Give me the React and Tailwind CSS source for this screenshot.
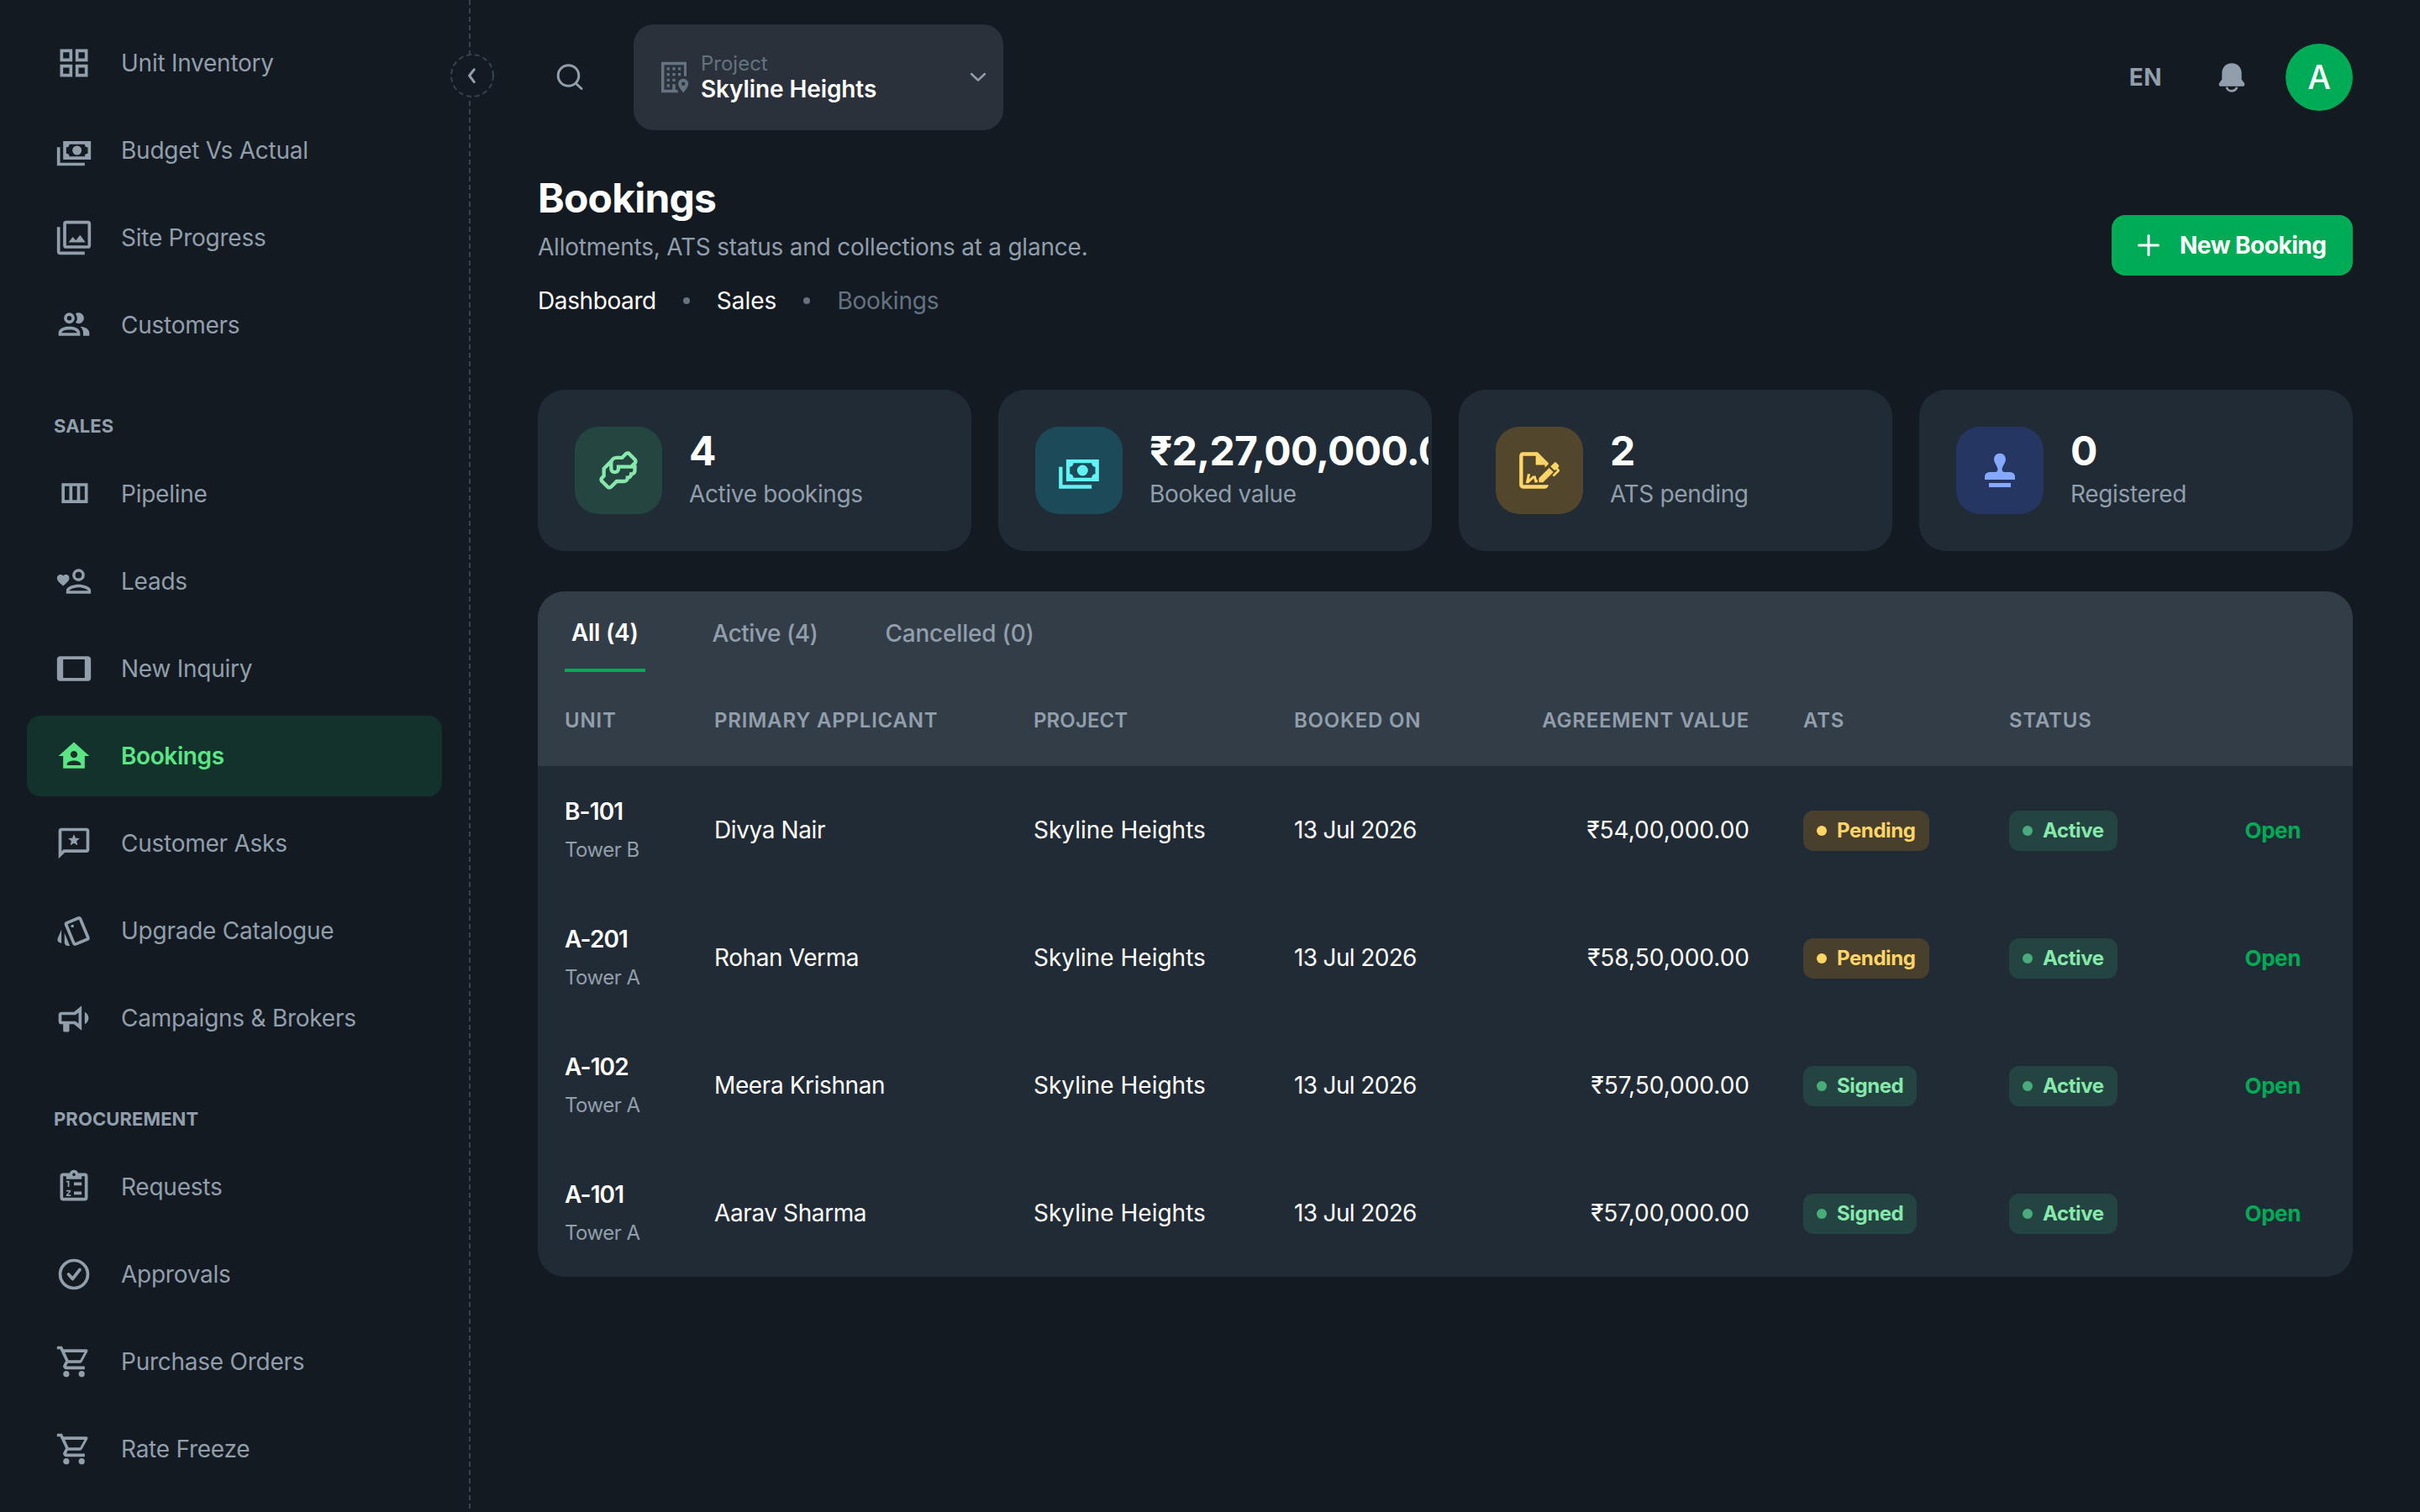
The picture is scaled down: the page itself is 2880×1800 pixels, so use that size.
import { MdOutlineStyle } from "react-icons/md";

const PATHS = {
  grid: "M3 3V11H11V3H3M9 9H5V5H9V9M3 13V21H11V13H3M9 19H5V15H9V19M13 3V11H21V3H13M19 9H15V5H19V9M13 13V21H21V13H13M19 19H15V15H19V19Z",
  cash: "M5,6H23V18H5V6M14,9A3,3 0 0,1 17,12A3,3 0 0,1 14,15A3,3 0 0,1 11,12A3,3 0 0,1 14,9M9,8A2,2 0 0,1 7,10V14A2,2 0 0,1 9,16H19A2,2 0 0,1 21,14V10A2,2 0 0,1 19,8H9M1,10H3V20H19V22H1V10Z",
  images: "M21,17H7V3H21M21,1H7A2,2 0 0,0 5,3V17A2,2 0 0,0 7,19H21A2,2 0 0,0 23,17V3A2,2 0 0,0 21,1M3,5H1V21A2,2 0 0,0 3,23H19V21H3M15.96,10.29L13.21,13.83L11.25,11.47L8.5,15H19.5L15.96,10.29Z",
  people: "M13.07 10.41A5 5 0 0 0 13.07 4.59A3.39 3.39 0 0 1 15 4A3.5 3.5 0 0 1 15 11A3.39 3.39 0 0 1 13.07 10.41M5.5 7.5A3.5 3.5 0 1 1 9 11A3.5 3.5 0 0 1 5.5 7.5M7.5 7.5A1.5 1.5 0 1 0 9 6A1.5 1.5 0 0 0 7.5 7.5M16 17V19H2V17S2 13 9 13 16 17 16 17M14 17C13.86 16.22 12.67 15 9 15S4.07 16.31 4 17M15.95 13A5.32 5.32 0 0 1 18 17V19H22V17S22 13.37 15.94 13Z",
  columns: "M4 5V18H21V5H4M6 16V7H9V16H6M11 16V7H14V16H11M19 16H16V7H19V16Z",
  lead: "M15,14C12.3,14 7,15.3 7,18V20H23V18C23,15.3 17.7,14 15,14M8.9,18.1C8.9,17.5 12,15.9 15,15.9C18,15.9 21.1,17.4 21.1,18.1H8.9M15,4A4,4 0 0,0 11,8A4,4 0 0,0 15,12A4,4 0 0,0 19,8A4,4 0 0,0 15,4M15,10.1A2.1,2.1 0 0,1 12.9,8A2.1,2.1 0 0,1 15,5.9C16.2,5.9 17.1,6.8 17.1,8C17.1,9.2 16.2,10.1 15,10.1M5,15L4.4,14.5C2.4,12.6 1,11.4 1,9.9C1,8.7 2,7.7 3.2,7.7C3.9,7.7 4.6,8 5,8.5C5.4,8 6.1,7.7 6.8,7.7C8,7.7 9,8.6 9,9.9C9,11.4 7.6,12.6 5.6,14.5L5,15Z",
  tablet: "M19,18H5V6H19M21,4H3C1.89,4 1,4.89 1,6V18A2,2 0 0,0 3,20H21A2,2 0 0,0 23,18V6C23,4.89 22.1,4 21,4Z",
  home: "M12 3L2 12H5V20H19V12H22L12 3M12 8.75A2.25 2.25 0 0 1 14.25 11 2.25 2.25 0 0 1 12 13.25 2.25 2.25 0 0 1 9.75 11 2.25 2.25 0 0 1 12 8.75M12 15C13.5 15 16.5 15.75 16.5 17.25V18H7.5V17.25C7.5 15.75 10.5 15 12 15Z",
  star: "M4 2A2 2 0 0 0 2 4V22L6 18H20A2 2 0 0 0 22 16V4A2 2 0 0 0 20 2H4M4 4H20V16H5.17L4 17.17V4M12 6L10.93 8.54L8.2 8.77L10.27 10.56L9.65 13.25L12 11.82L14.35 13.25L13.73 10.56L15.8 8.77L13.07 8.54L12 6Z",
  horn: "M12,8H4A2,2 0 0,0 2,10V14A2,2 0 0,0 4,16H5V20A1,1 0 0,0 6,21H8A1,1 0 0,0 9,20V16H12L17,20V4L12,8M15,15.6L13,14H4V10H13L15,8.4V15.6M21.5,12C21.5,13.71 20.54,15.26 19,16V8C20.53,8.75 21.5,10.3 21.5,12Z",
  clipboard: "M19,3H14.82C14.4,1.84 13.3,1 12,1C10.7,1 9.6,1.84 9.18,3H5A2,2 0 0,0 3,5V19A2,2 0 0,0 5,21H19A2,2 0 0,0 21,19V5A2,2 0 0,0 19,3M12,3A1,1 0 0,1 13,4A1,1 0 0,1 12,5A1,1 0 0,1 11,4A1,1 0 0,1 12,3M7,7H17V5H19V19H5V5H7V7M12 17V15H17V17H12M12 11V9H17V11H12M8 12V9H7V8H9V12H8M9.25 14A.75.75 0 0 1 10 14.75C10 14.95 9.92 15.14 9.79 15.27L8.12 17H10V18H7V17.08L9 15H7V14H9.25Z",
  cart: "M17,18A2,2 0 0,1 19,20A2,2 0 0,1 17,22C15.89,22 15,21.1 15,20C15,18.89 15.89,18 17,18M1,2H4.27L5.21,4H20A1,1 0 0,1 21,5C21,5.17 20.95,5.34 20.88,5.5L17.3,11.97C16.96,12.58 16.3,13 15.55,13H8.1L7.2,14.63L7.17,14.75A0.25,0.25 0 0,0 7.42,15H19V17H7C5.89,17 5,16.1 5,15C5,14.65 5.09,14.32 5.24,14.04L6.6,11.59L3,4H1V2M7,18A2,2 0 0,1 9,20A2,2 0 0,1 7,22C5.89,22 5,21.1 5,20C5,18.89 5.89,18 7,18M16,11L18.78,6H6.14L8.5,11H16Z",
  handshake: "M21.71 8.71C22.96 7.46 22.39 6 21.71 5.29L18.72 2.29C17.45 1.04 16 1.61 15.29 2.29L13.59 4H11C9.1 4 8 5 7.44 6.15L3 10.59V14.59L2.29 15.29C1.04 16.55 1.61 18 2.29 18.71L5.29 21.71C5.83 22.25 6.41 22.45 6.96 22.45C7.67 22.45 8.32 22.1 8.71 21.71L11.41 19H15C16.7 19 17.56 17.94 17.87 16.9C19 16.6 19.62 15.74 19.87 14.9C21.42 14.5 22 13.03 22 12V9H21.41L21.71 8.71M20 12C20 12.45 19.81 13 19 13L18 13L18 14C18 14.45 17.81 15 17 15L16 15L16 16C16 16.45 15.81 17 15 17H10.59L7.31 20.28C7 20.57 6.82 20.4 6.71 20.29L3.72 17.31C3.43 17 3.6 16.82 3.71 16.71L5 15.41V11.41L7 9.41V11C7 12.21 7.8 14 10 14S13 12.21 13 11H20V12M20.29 7.29L18.59 9H11V11C11 11.45 10.81 12 10 12S9 11.45 9 11V8C9 7.54 9.17 6 11 6H14.41L16.69 3.72C17 3.43 17.18 3.6 17.29 3.71L20.28 6.69C20.57 7 20.4 7.18 20.29 7.29Z",
  sign: "M19.7 12.9L14 18.6H11.7V16.3L17.4 10.6L19.7 12.9M23.1 12.1C23.1 12.4 22.8 12.7 22.5 13L20 15.5L19.1 14.6L21.7 12L21.1 11.4L20.4 12.1L18.1 9.8L20.3 7.7C20.5 7.5 20.9 7.5 21.2 7.7L22.6 9.1C22.8 9.3 22.8 9.7 22.6 10C22.4 10.2 22.2 10.4 22.2 10.6C22.2 10.8 22.4 11 22.6 11.2C22.9 11.5 23.2 11.8 23.1 12.1M3 20V4H10V9H15V10.5L17 8.5V8L11 2H3C1.9 2 1 2.9 1 4V20C1 21.1 1.9 22 3 22H15C16.1 22 17 21.1 17 20H3M11 17.1C10.8 17.1 10.6 17.2 10.5 17.2L10 15H8.5L6.4 16.7L7 14H5.5L4.5 19H6L8.9 16.4L9.5 18.7H10.5L11 18.6V17.1Z",
  stamp: "M12 2.6C10.1 2.6 8.8 4 8.8 5.9C8.8 8 10.8 9.6 10.8 11.5C10.8 12.5 10.2 12.9 9.3 12.9H6.3A2.6 2.6 0 0 0 3.7 15.5V17.1H20.3V15.5A2.6 2.6 0 0 0 17.7 12.9H14.7C13.8 12.9 13.2 12.5 13.2 11.5C13.2 9.6 15.2 8 15.2 5.9C15.2 4 13.9 2.6 12 2.6M6 18.9V21.2H18V18.9H6Z",
  bell: "M12 2C7.6 2 5 5.2 5 9V13.5L3.1 16C2.4 17 3 18.5 4.3 18.5H19.7C21 18.5 21.6 17 20.9 16L19 13.5V9C19 5.2 16.4 2 12 2Z",
};

function Icon({ name, className }) {
  return (
    <svg viewBox="0 0 24 24" fill="currentColor" fillRule="evenodd" className={className}>
      <path d={PATHS[name]} />
    </svg>
  );
}

function CheckIcon({ className }) {
  return (
    <svg viewBox="0 0 24 24" fill="none" stroke="currentColor" strokeWidth="2" strokeLinecap="round" strokeLinejoin="round" className={className}>
      <circle cx="12" cy="12" r="9" />
      <path d="M8.5 12l2.6 3L15.8 9" />
    </svg>
  );
}

function BuildingIcon({ className }) {
  return (
    <svg viewBox="0 0 40 40" fill="currentColor" fillRule="evenodd" className={className}>
      <path d="M3 1.7H33V18.8H30V5.2H6.5V34.8H16.3V28.3H19.7V34.8H22L23.4 38.3H3Z" />
      <path d="M9.7 8.3h3.2v3.3h-3.2zM16.4 8.3h3.2v3.3h-3.2zM23 8.3h3.2v3.3H23zM9.7 15h3.2v3.3h-3.2zM16.4 15h3.2v3.3h-3.2zM23 15h3.2v3.3H23zM9.7 21.7h3.2V25h-3.2zM16.4 21.7h3.2V25h-3.2zM9.7 28.3h3.2v3.4h-3.2z" />
      <path d="M29.2 21.7a6.1 6.1 0 0 0-6.1 6.1c0 4 6.1 10.5 6.1 10.5s6.1-6.5 6.1-10.5a6.1 6.1 0 0 0-6.1-6.1zm0 3.9a2.2 2.2 0 1 1 0 4.4 2.2 2.2 0 0 1 0-4.4z" />
    </svg>
  );
}

const inventory = [
  { icon: "grid", label: "Unit Inventory" },
  { icon: "cash", label: "Budget Vs Actual" },
  { icon: "images", label: "Site Progress" },
  { icon: "people", label: "Customers" },
];

const sales = [
  { icon: "columns", label: "Pipeline" },
  { icon: "lead", label: "Leads" },
  { icon: "tablet", label: "New Inquiry" },
  { icon: "home", label: "Bookings", active: true },
  { icon: "star", label: "Customer Asks" },
  { icon: "style", label: "Upgrade Catalogue" },
  { icon: "horn", label: "Campaigns & Brokers" },
];

const procurement = [
  { icon: "clipboard", label: "Requests" },
  { icon: "check", label: "Approvals" },
  { icon: "cart", label: "Purchase Orders" },
  { icon: "cart", label: "Rate Freeze" },
];

const stats = [
  { icon: "handshake", value: "4", label: "Active bookings", tile: "bg-[#254541] text-[#86e8ab]" },
  { icon: "cash", value: "₹2,27,00,000.00", label: "Booked value", tile: "bg-[#1c4a59] text-[#61f3f3]" },
  { icon: "sign", value: "2", label: "ATS pending", tile: "bg-[#52472d] text-[#ffd666]" },
  { icon: "stamp", value: "0", label: "Registered", tile: "bg-[#253662] text-[#84a9ff]" },
];

const bookings = [
  { unit: "B-101", tower: "Tower B", name: "Divya Nair", value: "₹54,00,000.00", ats: "Pending" },
  { unit: "A-201", tower: "Tower A", name: "Rohan Verma", value: "₹58,50,000.00", ats: "Pending" },
  { unit: "A-102", tower: "Tower A", name: "Meera Krishnan", value: "₹57,50,000.00", ats: "Signed" },
  { unit: "A-101", tower: "Tower A", name: "Aarav Sharma", value: "₹57,00,000.00", ats: "Signed" },
];

function NavIcon({ name }) {
  if (name === "style") return <MdOutlineStyle className="size-11" />;
  if (name === "check") return <CheckIcon className="size-11" />;
  return <Icon name={name} className="size-11" />;
}

function NavGroup({ title, items }) {
  return (
    <div>
      {title && (
        <h3 className="flex h-[69px] items-center pl-8 pt-1 text-[22px] font-bold tracking-[0.1px] text-[#919eab]">{title}</h3>
      )}
      <ul className="flex flex-col gap-2">
        {items.map((item) => (
          <li
            key={item.label}
            className={
              item.active
                ? "flex h-24 items-center gap-[34px] rounded-2xl bg-[#14322c] pl-[34px] text-[28px] font-semibold tracking-[-0.4px] text-[#5be584]"
                : "flex h-24 items-center gap-[34px] rounded-2xl pl-[34px] text-[28px] tracking-[-0.25px] text-[#919eab]"
            }
          >
            <NavIcon name={item.icon} />
            <span>{item.label}</span>
          </li>
        ))}
      </ul>
    </div>
  );
}

function Badge({ label }) {
  const pending = label === "Pending";
  return (
    <span
      className={
        pending
          ? "mt-0.5 inline-flex h-12 items-center gap-3 rounded-xl bg-[#483f2d] px-4 text-[24px] font-bold tracking-[-0.4px] text-[#ffd666]"
          : "mt-0.5 inline-flex h-12 items-center gap-3 rounded-xl bg-[#244442] px-4 text-[24px] font-bold tracking-[-0.4px] text-[#86e8ab]"
      }
    >
      <span className={pending ? "size-3 rounded-full bg-[#ffd666]" : "size-3 rounded-full bg-[#4aac7a]"} />
      {label}
    </span>
  );
}

function Sidebar() {
  return (
    <aside className="relative flex w-[560px] shrink-0 flex-col gap-9 pl-8 pr-[34px] pt-[27px]">
      <NavGroup items={inventory} />
      <NavGroup title="SALES" items={sales} />
      <NavGroup title="PROCUREMENT" items={procurement} />
      <svg className="absolute right-0 top-0 h-[1800px] w-0.5" aria-hidden="true">
        <line x1="1" y1="0" x2="1" y2="1800" stroke="#37424d" strokeWidth="2" strokeDasharray="6 4" />
      </svg>
      <button className="absolute left-[536px] top-16 flex size-[52px] items-center justify-center rounded-full bg-[#141a21] text-[#919eab]">
        <svg viewBox="0 0 52 52" fill="none" className="size-[52px]">
          <circle cx="26" cy="26" r="25" stroke="#37424d" strokeWidth="2" strokeDasharray="6 4" />
          <path d="M28.3 18.8L22.6 26l5.7 7.6" stroke="currentColor" strokeWidth="3" strokeLinecap="round" strokeLinejoin="round" />
        </svg>
      </button>
    </aside>
  );
}

function TopBar() {
  return (
    <header className="flex h-[184px] items-center">
      <svg viewBox="0 0 32 32" fill="none" stroke="#919eab" strokeWidth="3" strokeLinecap="round" className="ml-[22px] size-8">
        <circle cx="14.5" cy="14" r="12.3" />
        <path d="M23.5 23.5L30 29.5" />
      </svg>
      <div className="ml-[60px] flex h-[126px] w-[440px] items-center rounded-3xl bg-[#2b313b] pl-[30px] pr-5">
        <BuildingIcon className="size-10 text-[#637381]" />
        <div className="ml-2.5 flex-1 pb-[3px]">
          <p className="text-[24px] leading-[30px] text-[#637381]">Project</p>
          <p className="text-[28px] font-semibold leading-[30px] tracking-[-0.1px] text-white">Skyline Heights</p>
        </div>
        <svg viewBox="0 0 20 12" fill="none" stroke="#919eab" strokeWidth="2.5" strokeLinecap="round" strokeLinejoin="round" className="h-3 w-5">
          <path d="M2 2l8 7.5L18 2" />
        </svg>
      </div>
      <span className="ml-auto text-[28px] font-bold tracking-[0.5px] text-[#919eab]">EN</span>
      <svg viewBox="0 0 24 24" className="ml-[63px] size-10 text-[#919eab]" fill="currentColor">
        <path d={PATHS.bell} />
        <path d="M8.5 19a3.5 2.8 0 0 0 7 0" fill="none" stroke="currentColor" strokeWidth="1.7" />
      </svg>
      <div className="ml-11 flex size-20 items-center justify-center rounded-full bg-[#00ab55] text-[39px] font-medium text-white">A</div>
    </header>
  );
}

function StatCard({ stat }) {
  return (
    <div className="flex h-48 min-w-0 items-center overflow-hidden rounded-[32px] bg-[#212b36] pl-11 pr-1">
      <div className={`flex size-[104px] shrink-0 items-center justify-center rounded-[28px] ${stat.tile}`}>
        <Icon name={stat.icon} className="size-[52px]" />
      </div>
      <div className="-mt-1 ml-8 min-w-0 flex-1">
        <p className="overflow-hidden whitespace-nowrap text-[48px] font-bold leading-[60px] tracking-[-0.7px] text-white">{stat.value}</p>
        <p className="text-[28px] leading-[42px] tracking-[-0.35px] text-[#919eab]">{stat.label}</p>
      </div>
    </div>
  );
}

function BookingsTable() {
  const cols = "grid grid-cols-[178px_380px_310px_270px_272px_309px_280px_1fr] pl-8 pr-[62px]";
  return (
    <section className="mt-12 overflow-hidden rounded-[32px] bg-[#212b36]">
      <div className="h-[208px] bg-[#333d48]">
        <nav className="flex h-24 gap-20 pl-8 text-[28px] font-medium text-[#919eab]">
          <span className="flex items-center border-b-4 border-[#00ab55] px-2 pt-1.5 font-semibold tracking-[-0.3px] text-white">All (4)</span>
          <span className="flex items-center pt-1 tracking-[-0.5px]">Active (4)</span>
          <span className="flex items-center pt-1 tracking-[-0.2px]">Cancelled (0)</span>
        </nav>
        <div className={`${cols} h-28 items-center pt-[3px] text-[24px] font-semibold tracking-[0.8px] text-[#919eab]`}>
          <span>UNIT</span>
          <span>PRIMARY APPLICANT</span>
          <span className="tracking-[0.1px]">PROJECT</span>
          <span>BOOKED ON</span>
          <span className="text-right">AGREEMENT VALUE</span>
          <span className="pl-16">ATS</span>
          <span>STATUS</span>
        </div>
      </div>
      {bookings.map((b) => (
        <div key={b.unit} className={`${cols} h-[152px] items-center text-[28px] text-white`}>
          <div>
            <p className="font-semibold leading-[46px] tracking-[-0.9px]">{b.unit}</p>
            <p className="pt-px text-[24px] leading-[44px] tracking-[-0.5px] text-[#919eab]">{b.tower}</p>
          </div>
          <span className="tracking-[-0.4px]">{b.name}</span>
          <span>Skyline Heights</span>
          <span className="tracking-[-0.65px]">13 Jul 2026</span>
          <span className="text-right">{b.value}</span>
          <span className="flex pl-16"><Badge label={b.ats} /></span>
          <span className="flex"><Badge label="Active" /></span>
          <a className="text-right text-[26px] font-bold tracking-[-0.4px] text-[#00ab55]">Open</a>
        </div>
      ))}
    </section>
  );
}

export default function App() {
  return (
    <div className="flex h-[1800px] w-[2880px] overflow-hidden bg-[#141a21] font-['Inter',sans-serif]">
      <Sidebar />
      <main className="w-[2320px] min-w-0 shrink-0 px-20">
        <TopBar />
        <div className="flex h-[280px] justify-between">
          <div>
            <h1 className="mt-6 text-[48px] font-bold leading-[56px] tracking-[-0.8px] text-white">Bookings</h1>
            <p className="mt-2 text-[28px] leading-[44px] tracking-[-0.22px] text-[#919eab]">Allotments, ATS status and collections at a glance.</p>
            <div className="mt-5 flex items-center gap-8 text-[28px] leading-[44px] tracking-[-0.4px] text-white">
              <span>Dashboard</span>
              <span className="size-2 rounded-full bg-[#637381]" />
              <span className="tracking-normal">Sales</span>
              <span className="size-2 rounded-full bg-[#637381]" />
              <span className="tracking-[-0.2px] text-[#637381]">Bookings</span>
            </div>
          </div>
          <button className="mt-[72px] flex h-[72px] w-[287px] items-center gap-6 whitespace-nowrap rounded-2xl bg-[#00ab55] pl-[31px] text-[28px] font-bold tracking-[-0.5px] text-white">
            <svg viewBox="0 0 26 26" fill="none" stroke="currentColor" strokeWidth="3" strokeLinecap="round" className="size-[26px]">
              <path d="M13 1.5v23M1.5 13h23" />
            </svg>
            New Booking
          </button>
        </div>
        <div className="grid grid-cols-4 gap-8">
          {stats.map((s) => (
            <StatCard key={s.label} stat={s} />
          ))}
        </div>
        <BookingsTable />
      </main>
    </div>
  );
}
